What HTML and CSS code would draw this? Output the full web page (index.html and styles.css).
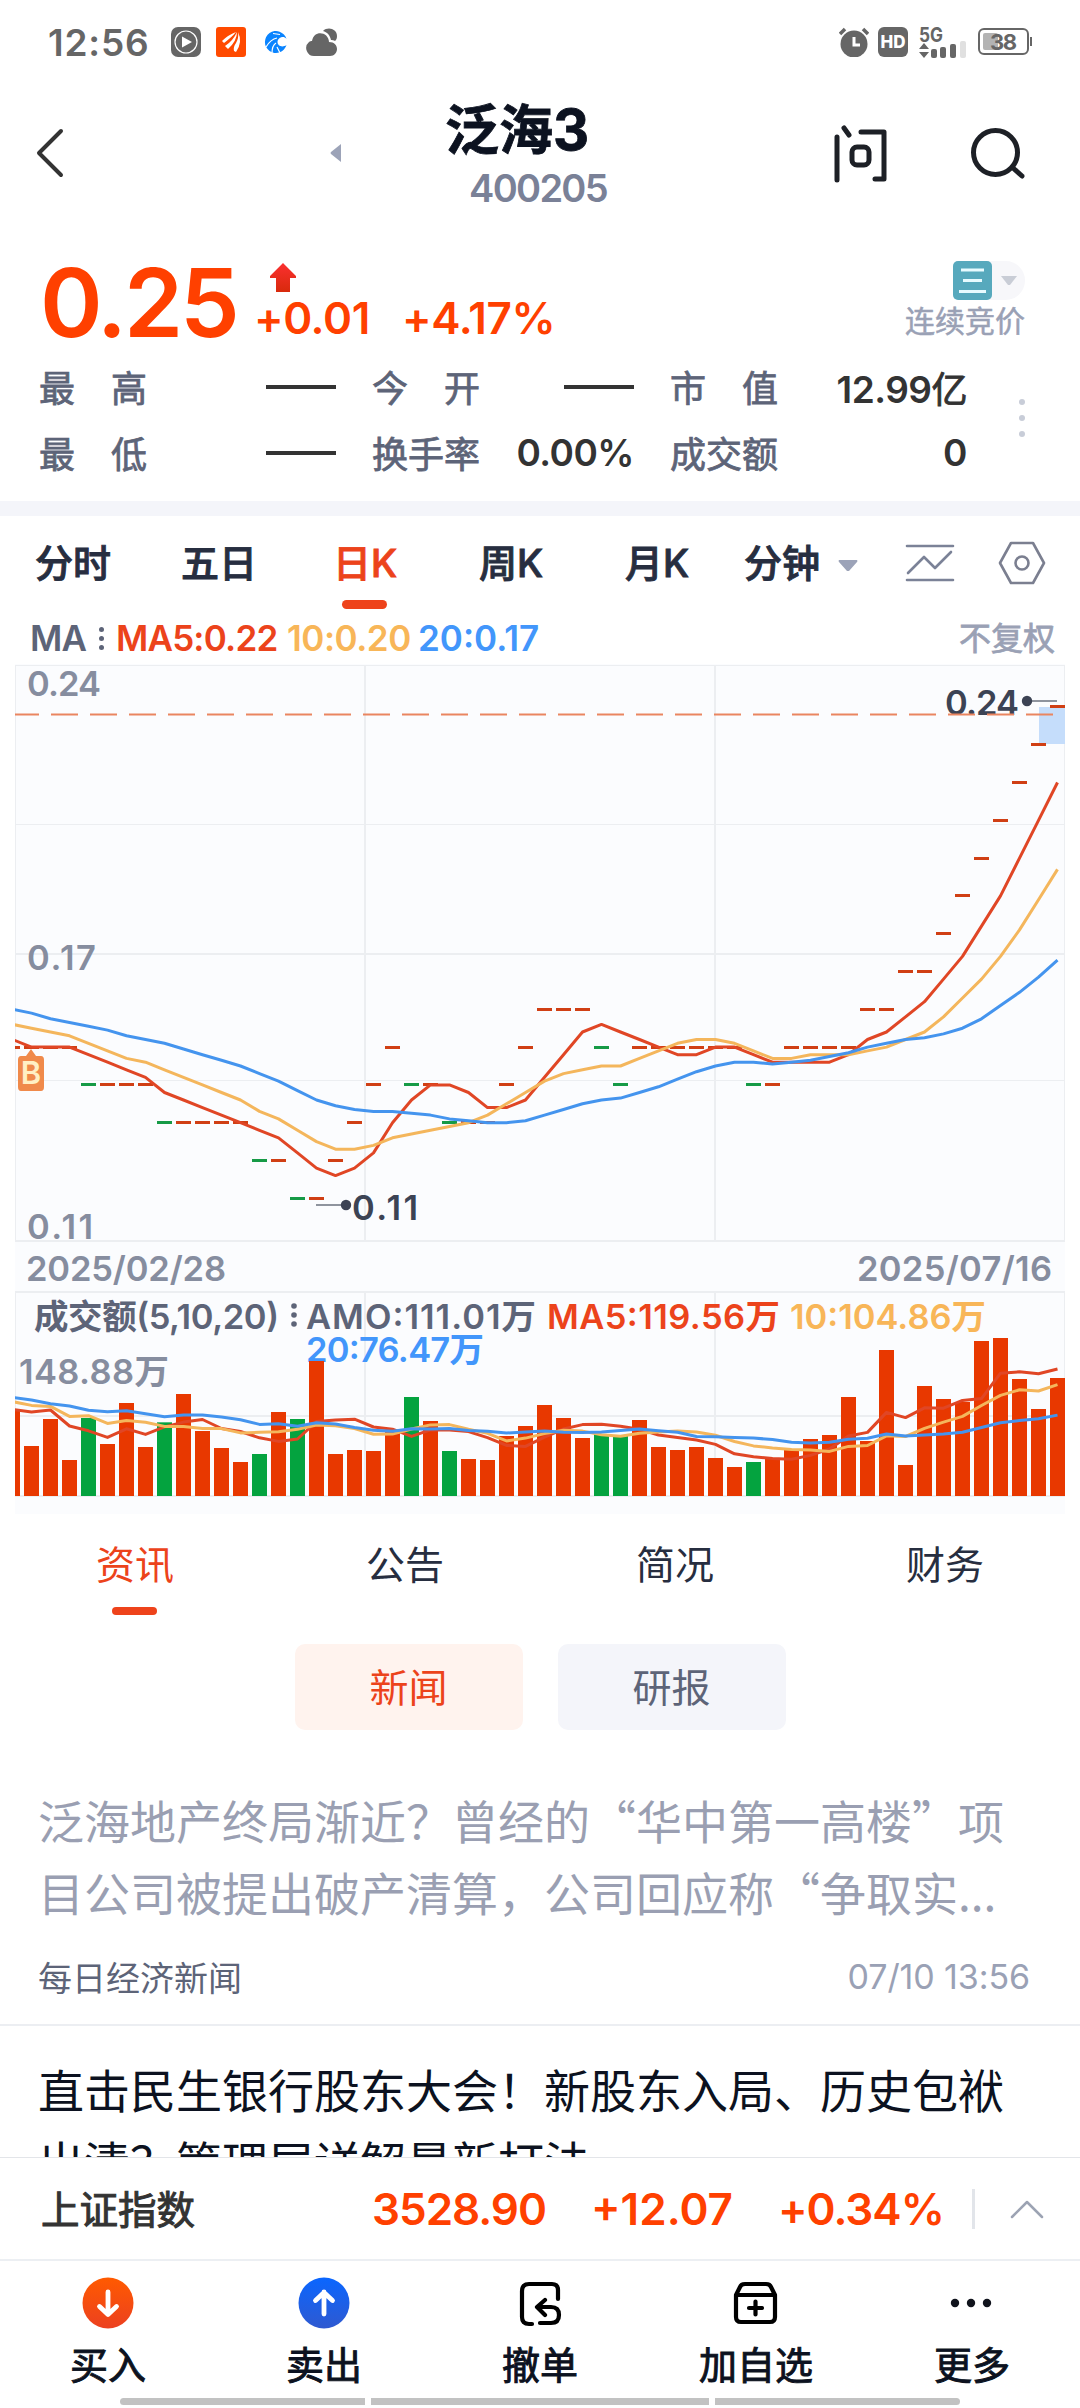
FILE: index.html
```
<!DOCTYPE html>
<html lang="zh-CN">
<head>
    <meta charset="UTF-8">
    <title>泛海3 400205</title>
    <link rel="stylesheet" href="styles.css">
</head>
<body>
    <div class="screen">
        <!-- Status bar -->
        <div class="status-bar">
            <span class="clock">12:56</span>
            <div class="status-left">
                <svg width="30" height="30" viewBox="0 0 30 30"><rect width="30" height="30" rx="7" fill="#666"/><circle cx="15" cy="15" r="11" fill="none" stroke="#fff" stroke-width="1.2"/><path d="M11 9.5v11l10-5.5z" fill="#fff"/></svg>
                <svg width="30" height="30" viewBox="0 0 30 30"><rect width="30" height="30" rx="3" fill="#ff4a00"/><path d="M6 14q6-6 14-9-4 5-12 11zM9 19q8-5 12-14 0 9-9 17zM18 24q-1-4 2-8 3-5 2-11 5 10-2 20z" fill="#fff"/></svg>
                <svg width="30" height="30" viewBox="0 0 30 30"><path d="M25.500 12A11 11 0 1 0 25.500 18c-4 3-9 1-9-3s6-7 9-3z" fill="#0a84ff"/><path d="M5 20c3-5 6-8 11-9M11 26c0-5 1-8 4-10M19 26l-3-6M12 6.500l7 1" fill="none" stroke="#fff" stroke-width="1.2"/></svg>
                <svg width="32" height="30" viewBox="0 0 32 30"><path d="M17 4c5-5 14-2 14 5 0 3-1 4-2 5-1-1-3-1-4-1-1-5-4-8-8-9z" fill="#666"/><path d="M9 29a8 8 0 0 1-6-14c1-1 2-1 3-1 2-12 17-9 17 1 11 0 10 14 1 14z" fill="#666"/></svg>
            </div>
            <div class="status-right">
                <svg width="30" height="30" viewBox="0 0 30 30"><circle cx="15" cy="17" r="13.500" fill="#666"/><path d="M1 7l5-5M29 7l-5-5" stroke="#666" stroke-width="3.500"/><path d="M15 10v8h6" fill="none" stroke="#fff" stroke-width="3"/></svg>
                <span class="hd">HD</span>
                <svg class="signal" width="50" height="31" viewBox="0 0 50 31">
                    <text x="0" y="15" font-size="20" font-weight="700" fill="#666" textLength="24" lengthAdjust="spacingAndGlyphs">5G</text>
                    <path d="M0 22l5-6 5 6zM0 25h10l-5 6z" fill="#666"/>
                    <rect x="12" y="22" width="6" height="9" rx="2" fill="#666"/><rect x="21" y="20" width="6" height="11" rx="2" fill="#666"/><rect x="31" y="17" width="6" height="14" rx="2" fill="#666"/><rect x="41" y="14" width="6" height="17" rx="2" fill="#e0e0e0"/>
                </svg>
                <svg width="55" height="28" viewBox="0 0 55 28">
                    <rect x="1" y="1" width="49" height="25" rx="5" fill="none" stroke="#666" stroke-width="2"/>
                    <rect x="5" y="5" width="15" height="17" rx="2" fill="#b3b3b3"/><rect x="52" y="9" width="2" height="9" fill="#666"/>
                    <text x="12" y="22" font-size="22" font-weight="700" fill="#666" textLength="27">38</text>
                </svg>
            </div>
        </div>

        <!-- Header -->
        <div class="header">
            <svg class="back" width="30" height="50" viewBox="0 0 30 50"><path d="M26 3L4 25l22 22" fill="none" stroke="#333" stroke-width="4" stroke-linecap="round" stroke-linejoin="round"/></svg>
            <svg class="prev" width="12" height="20" viewBox="0 0 12 20"><path d="M11 1v18L1 11q-1-1 0-2z" fill="#9ca3b8"/></svg>
            <div class="stock">
                <h1>泛海<span>3</span></h1>
                <p>400205</p>
            </div>
            <svg class="ask" width="56" height="60" viewBox="0 0 56 60"><g fill="none" stroke="#1d2026" stroke-width="5" stroke-linecap="round" stroke-linejoin="round"><path d="M5 14v43M12 5l5 7M29 9h23v47h-9"/><rect x="20" y="24" width="17" height="18" rx="5"/></g></svg>
            <svg class="search" width="56" height="52" viewBox="0 0 56 52"><g fill="none" stroke="#1d2026" stroke-width="5" stroke-linecap="round"><circle cx="25.500" cy="25.500" r="22"/><path d="M43 41l9 8"/></g></svg>
        </div>

        <!-- Quote -->
        <div class="quote">
            <div class="quote-top">
                <span class="price">0.25</span>
                <div class="change">
                    <svg width="26" height="30" viewBox="0 0 26 30"><defs><linearGradient id="up" x1="0" y1="0" x2="0" y2="1"><stop offset="0" stop-color="#fb3030"/><stop offset="1" stop-color="#d82a0c"/></linearGradient></defs><path d="M13 0l13 13v2h-6v14H6V15H0v-2z" fill="url(#up)"/></svg>
                    <div class="change-nums"><span class="diff">+0.01</span><span class="pct">+4.17%</span></div>
                </div>
                <div class="phase">
                    <div class="phase-badge">
                        <svg width="39" height="39" viewBox="0 0 39 39"><rect width="39" height="39" rx="5" fill="#57a9bd"/><path d="M8 9h23M10 19.500h19M6 30.500h27" stroke="#e8fbff" stroke-width="3"/></svg>
                        <svg width="16" height="10" viewBox="0 0 16 10"><path d="M0 0h16L9 9H7z" fill="#c9cdd6"/></svg>
                    </div>
                    <span>连续竞价</span>
                </div>
            </div>
            <div class="stats">
                <div class="stat"><label>最<i></i>高</label><b class="none"></b></div>
                <div class="stat"><label>今<i></i>开</label><b class="none"></b></div>
                <div class="stat"><label>市<i></i>值</label><b>12.99<em>亿</em></b></div>
                <div class="stat"><label>最<i></i>低</label><b class="none"></b></div>
                <div class="stat"><label>换手率</label><b>0.00%</b></div>
                <div class="stat"><label>成交额</label><b>0</b></div>
                <div class="stats-more"><i></i><i></i><i></i></div>
            </div>
        </div>

        <!-- Period tabs -->
        <div class="periods">
            <span>分时</span>
            <span>五日</span>
            <span class="active">日K</span>
            <span>周K</span>
            <span>月K</span>
            <span class="minutes">分钟<svg width="20" height="12" viewBox="0 0 20 12"><path d="M1 0h18q1 1 0 2l-8 9h-2L1 2q-1-1 0-2z" fill="#9ca3b8"/></svg></span>
            <svg class="tool-line" width="50" height="40" viewBox="0 0 50 40"><g fill="none" stroke="#7b8297" stroke-width="2.600" stroke-linecap="round" stroke-linejoin="round"><path d="M2 3h46M2 37h46M3 30l16-16 11 11L46 9"/></g></svg>
            <svg class="tool-set" width="48" height="44" viewBox="0 0 48 44"><g fill="none" stroke="#7b7f90" stroke-width="2.600"><path d="M13 2h22l11 20-11 20H13L2 22z" stroke-linejoin="round"/><circle cx="24" cy="22" r="6.500"/></g></svg>
        </div>

        <div class="ma-legend">
            <span class="ma-name">MA</span>
            <span class="dots"><i></i><i></i><i></i></span>
            <span class="ma5">MA5:0.22</span>
            <span class="ma10">10:0.20</span>
            <span class="ma20">20:0.17</span>
            <span class="adjust">不复权</span>
        </div>

        <!-- K line + turnover -->
        <svg class="chart" width="1050" height="850" viewBox="15 664 1050 850">
            <rect x="15" y="664" width="1050" height="850" fill="#fbfcfe"/>
            <g class="grid">
                <path d="M15 665.500h1050M15 824.500h1050M15 1080.500h1050M15.500 665v576M1064.500 665v576M15.500 1292v204M1064.500 1292v204" stroke-width="1"/>
                <path d="M15 954h1050M15 1241h1050M15 1292h1050M15 1416h1050M15 1496h1050M365 665v576M715 665v576M365 1292v204M715 1292v204" stroke-width="2"/>
            </g>
            <g class="axis">
                <text x="27" y="696" textLength="74">0.24</text>
                <text x="27" y="970" textLength="69">0.17</text>
                <text x="27" y="1239" textLength="66">0.11</text>
                <text x="26" y="1281" textLength="200">2025/02/28</text>
                <text x="857" y="1281" textLength="195">2025/07/16</text>
                <text x="19" y="1384" textLength="150">148.88万</text>
            </g>
            <rect x="1039" y="707" width="26" height="37" fill="#c5ddfb"/>
            <g class="mark">
                <text x="945" y="715" textLength="74">0.24</text>
                <path d="M1027 701h30M316 1205h30"/>
                <circle cx="1027" cy="701" r="5.200"/>
                <circle cx="346" cy="1205" r="5.200"/>
                <text x="352" y="1220" textLength="66">0.11</text>
            </g>
            <path class="last-price" d="M12 714.500H1053"/>
            <g class="legend">
                <text x="34" y="1329" textLength="245" fill="#5d6478">成交额(5,10,20)</text>
                <g fill="#5d6478"><circle cx="294" cy="1306" r="2.800"/><circle cx="294" cy="1315" r="2.800"/><circle cx="294" cy="1324" r="2.800"/></g>
                <text x="306" y="1329" textLength="230" fill="#5d6478">AMO:111.01万</text>
                <text x="547" y="1329" textLength="233" fill="#ec431b">MA5:119.56万</text>
                <text x="790" y="1329" textLength="196" fill="#f8b658">10:104.86万</text>
                <text x="306" y="1362" textLength="178" fill="#4296fb">20:76.47万</text>
            </g>
            <g id="candles"></g>
            <g id="bars"></g>
            <g id="lines" class="lines"></g>
            <g class="buy-mark">
                <path d="M31 1049l5 7h5q3 0 3 4v27q0 4-3 4H21q-3 0-3-4v-27q0-4 3-4h5z" fill="#f08a4b"/>
                <text x="31" y="1084" text-anchor="middle">B</text>
            </g>
        </svg>

        <!-- Info tabs -->
        <div class="info-tabs">
            <span class="active">资讯</span>
            <span>公告</span>
            <span>简况</span>
            <span>财务</span>
        </div>
        <div class="chips">
            <span class="chip active">新闻</span>
            <span class="chip">研报</span>
        </div>

        <div class="news">
            <div class="news-item read">
                <h3>泛海地产终局渐近？曾经的“华中第一高楼”项<br>目公司被提出破产清算，公司回应称“争取实...</h3>
                <div class="meta"><span>每日经济新闻</span><time>07/10 13:56</time></div>
            </div>
            <div class="news-item">
                <h3>直击民生银行股东大会！新股东入局、历史包袱<br>出清？管理层详解最新打法</h3>
            </div>
        </div>

        <!-- Index ticker -->
        <div class="ticker">
            <span class="index-name">上证指数</span>
            <span class="index-val">3528.90</span>
            <span class="index-diff">+12.07</span>
            <span class="index-pct">+0.34%</span>
            <i class="sep"></i>
            <svg width="34" height="20" viewBox="0 0 34 20"><path d="M2 18L17 3l15 15" fill="none" stroke="#9ca3b3" stroke-width="2.500" stroke-linecap="round" stroke-linejoin="round"/></svg>
        </div>

        <!-- Bottom actions -->
        <div class="actions">
            <div class="action">
                <svg width="52" height="54" viewBox="0 0 52 54"><defs><linearGradient id="buy" x1="0" y1="0" x2="0" y2="1"><stop offset="0" stop-color="#ff5a00"/><stop offset="1" stop-color="#ec4020"/></linearGradient></defs><ellipse cx="26" cy="27" rx="25.500" ry="25.500" fill="url(#buy)"/><path d="M26 16v22M17.500 30.500l8.500 8 8.500-8" fill="none" stroke="#fff" stroke-width="4.800" stroke-linecap="round" stroke-linejoin="round"/></svg>
                <span>买入</span>
            </div>
            <div class="action">
                <svg width="52" height="54" viewBox="0 0 52 54"><defs><linearGradient id="sell" x1="0" y1="0" x2="0" y2="1"><stop offset="0" stop-color="#0a66ff"/><stop offset="1" stop-color="#2f59d0"/></linearGradient></defs><ellipse cx="26" cy="27" rx="25.500" ry="25.500" fill="url(#sell)"/><path d="M26 38V16M17.500 24.500l8.500-8 8.500 8" fill="none" stroke="#fff" stroke-width="4.800" stroke-linecap="round" stroke-linejoin="round"/></svg>
                <span>卖出</span>
            </div>
            <div class="action">
                <svg width="52" height="54" viewBox="0 0 52 54"><g fill="none" stroke="#000" stroke-width="4.200" stroke-linecap="round" stroke-linejoin="round"><path d="M18 48h-3q-7 0-7-7V15q0-7 7-7h23q6 0 6 6v9M26 47h11q8 0 8-8t-8-8H24M31 24l-8 7 8 8"/></g></svg>
                <span>撤单</span>
            </div>
            <div class="action">
                <svg width="52" height="54" viewBox="0 0 52 54"><g fill="none" stroke="#000" stroke-width="4.200" stroke-linecap="round" stroke-linejoin="round"><path d="M6 19l4-8q1-3 5-3h21q4 0 5 3l4 8v22q0 5-5 5H11q-5 0-5-5zM6 19h39M19 32h13M25.500 25.500v13"/></g></svg>
                <span>加自选</span>
            </div>
            <div class="action">
                <svg width="52" height="54" viewBox="0 0 52 54"><g fill="#10131c"><circle cx="9" cy="27" r="4.200"/><circle cx="25" cy="27" r="4.200"/><circle cx="41" cy="27" r="4.200"/></g></svg>
                <span>更多</span>
            </div>
        </div>
        <div class="home-bar"><i></i><i class="mid"></i><i></i></div>
    </div>

    <script src="script.js"></script>
</body>
</html>
```
FILE: styles.css
```
* {
    margin: 0;
    padding: 0;
    box-sizing: border-box;
}

body {
    font-family: "Inter", "Noto Sans CJK SC", sans-serif;
    background: #fff;
    color: #0c1220;
}

i, em {
    font-style: normal;
}

svg {
    display: block;
    flex-shrink: 0;
}

.screen {
    width: 1080px;
    height: 2408px;
    overflow: hidden;
    display: flex;
    flex-direction: column;
}

.screen > * {
    flex-shrink: 0;
}

/* status bar */
.status-bar {
    height: 84px;
    padding: 0 47px 0 48px;
    display: flex;
    align-items: center;
}

.clock {
    width: 123px;
    font-size: 37px;
    font-weight: 600;
    letter-spacing: 0.8px;
    color: #666;
}

.status-left {
    display: flex;
    gap: 15px;
}

.status-right {
    display: flex;
    align-items: center;
    gap: 9px;
    margin-left: auto;
}

.signal {
    overflow: visible;
}

.hd {
    width: 30px;
    height: 30px;
    border-radius: 6px;
    background: #666;
    color: #fff;
    font-size: 17px;
    font-weight: 800;
    line-height: 30px;
    text-align: center;
    margin-right: 2px;
}

/* header */
.header {
    height: 138px;
    display: flex;
    align-items: center;
    padding-left: 35px;
}

.prev {
    margin-left: 265px;
}

.stock {
    width: 290px;
    margin: 14px 0 0 30px;
    text-align: center;
}

.stock h1 {
    font-size: 54px;
    font-weight: 700;
    line-height: 56px;
    color: #0c1220;
    padding-right: 4px;
    -webkit-text-stroke: 0.8px #0c1220;
}

.stock h1 span {
    font-size: 56px;
    line-height: 50px;
    letter-spacing: -4px;
}

.stock p {
    font-size: 38px;
    font-weight: 600;
    line-height: 58px;
    letter-spacing: -1.7px;
    color: #7a8197;
    padding-left: 42px;
}

.ask {
    margin-left: 170px;
}

.search {
    margin-left: 82px;
}

/* quote */
.quote {
    height: 279px;
    padding: 28px 40px 0;
}

.quote-top {
    display: flex;
    height: 104px;
    color: #ff4000;
}

.price {
    width: 214px;
    font-size: 95px;
    font-weight: 600;
    line-height: 106px;
    letter-spacing: -3.2px;
}

.change {
    padding-top: 13px;
}

.change svg {
    margin-left: 16px;
}

.change-nums {
    display: flex;
    font-size: 44px;
    font-weight: 600;
    line-height: 51px;
    letter-spacing: -0.4px;
}

.diff {
    width: 148px;
}

.phase {
    margin: 11px 15px 0 auto;
    color: #9aa1b5;
    font-size: 30px;
    line-height: 43px;
    -webkit-text-stroke: 0.5px #9aa1b5;
}

.phase-badge {
    width: 72px;
    height: 39px;
    margin-left: auto;
    display: flex;
    align-items: center;
    gap: 9px;
    background: #f7f7fa;
    border-radius: 6px 20px 20px 6px;
}

.stats {
    position: relative;
    display: grid;
    grid-template-columns: 297px 298px 295px;
    column-gap: 0;
    justify-content: start;
    margin-left: -1px;
}

.stat {
    display: flex;
    align-items: center;
    justify-content: space-between;
    height: 66px;
    font-size: 36px;
}

.stat:nth-child(3n+2) {
    padding-left: 36px;
}

.stat:nth-child(3n) {
    padding-left: 36px;
    margin-right: -38px;
}

.stat label {
    display: flex;
    margin-top: -3px;
    color: #5d6478;
    -webkit-text-stroke: 0.8px #5d6478;
}

.stat label i {
    width: 36px;
}

.stat b {
    margin-top: -1px;
    color: #333;
    font-size: 37px;
    font-weight: 600;
    letter-spacing: -0.5px;
}

.stat em {
    font-size: 36px;
    font-weight: 400;
    -webkit-text-stroke: 0.9px #333;
}

.stat .none {
    margin-top: 0;
    width: 70px;
    height: 4px;
    background: #333;
}

.stats-more {
    position: absolute;
    left: 980px;
    top: 45px;
    display: flex;
    flex-direction: column;
    gap: 10px;
}

.stats-more i {
    width: 6px;
    height: 6px;
    border-radius: 50%;
    background: #c8cdd8;
}

/* period tabs */
.periods {
    height: 109px;
    border-top: 15px solid #f4f5fa;
    display: flex;
    align-items: center;
    font-size: 38px;
    font-weight: 500;
    color: #272e40;
    -webkit-text-stroke: 0.9px currentColor;
}

.periods span {
    position: relative;
    width: 146px;
    text-align: center;
    line-height: 94px;
}

.periods .active {
    color: #ec431b;
}

.periods .active::after,
.info-tabs .active::after {
    content: "";
    position: absolute;
    left: 50%;
    bottom: 1px;
    width: 45px;
    height: 9px;
    margin-left: -23px;
    border-radius: 5px;
    background: #ee431b;
}

.periods .minutes {
    width: 128px;
    margin-left: 14px;
    display: flex;
    align-items: center;
    gap: 18px;
}

.minutes svg {
    margin-top: 6px;
}

.tool-line {
    margin-left: 33px;
}

.tool-set {
    margin-left: 43px;
}

/* moving average legend */
.ma-legend {
    height: 54px;
    padding: 3px 25px 0 30px;
    display: flex;
    align-items: center;
    font-size: 35px;
    font-weight: 600;
    line-height: 51px;
    letter-spacing: -0.8px;
}

.ma-name {
    width: 69px;
    color: #5d6478;
}

.dots {
    width: 17px;
    display: flex;
    flex-direction: column;
    gap: 4px;
}

.dots i {
    width: 5px;
    height: 5px;
    border-radius: 50%;
    background: #5d6478;
}

.ma5 {
    width: 171px;
    color: #ec431b;
}

.ma10 {
    width: 131px;
    color: #f8b658;
    letter-spacing: -0.5px;
}

.ma20 {
    color: #4296fb;
    letter-spacing: 0;
}

.adjust {
    margin-left: auto;
    font-size: 32px;
    font-weight: 400;
    letter-spacing: 0;
    color: #9aa1b5;
    -webkit-text-stroke: 0.8px #9aa1b5;
}

/* chart */
.chart {
    margin-left: 15px;
}

.chart text {
    font-size: 34.500px;
    font-weight: 600;
}

.grid path {
    fill: none;
    stroke: #eceef1;
}

.axis {
    fill: #868d9f;
}

.mark {
    fill: #3c4354;
}

.mark path {
    stroke: #8f949e;
    stroke-width: 2;
}

.last-price {
    fill: none;
    stroke: #ea8560;
    stroke-width: 2;
    stroke-dasharray: 27 12;
}

.rise {
    fill: #e83800;
}

.fall {
    fill: #04a33f;
}

#candles .rise {
    fill: #d03f14;
}

#candles .fall {
    fill: #169a46;
}

.lines polyline {
    fill: none;
    stroke-width: 3;
    stroke-linejoin: round;
}

.line-5 {
    stroke: #e04625;
}

.line-10 {
    stroke: #f4b65c;
}

.line-20 {
    stroke: #4494ee;
}

.chart .buy-mark text {
    font-size: 31px;
    fill: #fff0c4;
}

/* info tabs */
.info-tabs {
    display: flex;
    height: 104px;
    font-size: 39px;
    line-height: 102px;
    color: #272e40;
}

.info-tabs span {
    position: relative;
    flex: 1;
    text-align: center;
}

.info-tabs .active {
    color: #ec431b;
}

.info-tabs .active::after {
    bottom: 3px;
    height: 8px;
}

.chips {
    display: flex;
    justify-content: center;
    gap: 35px;
    padding-top: 26px;
    height: 139px;
}

.chip {
    width: 228px;
    height: 86px;
    border-radius: 10px;
    background: #f4f5fa;
    color: #5d6478;
    font-size: 39px;
    line-height: 88px;
    text-align: center;
}

.chip.active {
    background: #fff3ee;
    color: #ec431b;
}

/* news */
.news {
    height: 400px;
    overflow: hidden;
    font-family: "Noto Sans CJK SC", sans-serif;
}

.news-item {
    padding: 26px 38px 0;
    border-bottom: 2px solid #eceef2;
}

.news-item h3 {
    font-size: 46px;
    font-weight: 400;
    line-height: 72px;
    white-space: nowrap;
}

.news-item.read {
    height: 269px;
}

.read h3 {
    color: #9a9fb2;
}

.meta {
    display: flex;
    justify-content: space-between;
    align-items: center;
    margin-top: 25px;
    padding-right: 12px;
    font-size: 34px;
    line-height: 50px;
    color: #5d6478;
}

.meta time {
    color: #9aa1b5;
    font-family: "Inter", sans-serif;
    font-size: 34px;
    letter-spacing: -0.1px;
}

/* index ticker */
.ticker {
    height: 104px;
    padding-left: 41px;
    border-top: 1px solid #e3e5e9;
    border-bottom: 2px solid #eceff3;
    display: flex;
    align-items: center;
    font-size: 44px;
    font-weight: 600;
    letter-spacing: -1px;
    color: #ff4000;
    background: #fff;
}

.index-name {
    width: 331px;
    margin-top: -3px;
    font-size: 38.500px;
    letter-spacing: 0;
    font-weight: 400;
    color: #333;
    -webkit-text-stroke: 1px #333;
}

.index-val {
    width: 219px;
}

.index-diff {
    width: 187px;
    letter-spacing: 0;
}

.index-pct {
    width: 194px;
}

.sep {
    width: 3px;
    height: 40px;
    background: #e2e5ea;
    margin-right: 35px;
}

/* bottom actions */
.actions {
    height: 137px;
    padding-top: 15px;
    display: flex;
    background: #fff;
}

.action {
    flex: 1;
    display: flex;
    flex-direction: column;
    align-items: center;
    font-size: 38px;
    line-height: 70px;
    -webkit-text-stroke: 0.9px #0c1220;
}

.home-bar {
    display: flex;
    justify-content: center;
    gap: 6px;
}

.home-bar i {
    width: 245px;
    height: 7px;
    background: #c2c2c2;
    border-radius: 4px 0 0 4px;
}

.home-bar i:last-child {
    border-radius: 0 4px 4px 0;
}

.home-bar .mid {
    width: 338px;
    border-radius: 0;
}
```
FILE: script.js
```
const NS = 'http://www.w3.org/2000/svg';
const HISTORY = 21; // days loaded before the first visible one, needed by the averages
const STEP = 19;

// closing price, in cents
const close = [
    17, 18, 17, 16, 16, 17, 16, 15, 16, 16, 16, 16, 16, 16, 16, 16, 15, 15, 15, 15,
    15, 15, 15, 14, 14, 14, 14, 13, 13, 13, 13, 13, 12, 12, 11, 11, 12, 13, 14, 15,
    14, 14, 13, 13, 13, 14, 15, 16, 16, 16, 15, 14, 15, 15, 15, 15, 15, 15, 14, 14,
    15, 15, 15, 15, 16, 16, 17, 17, 18, 19, 20, 21, 22, 23, 24
];

// turnover, 354 = 111.01万
const amount = [
    300, 451, 248, 494, 236, 219, 327, 401, 206, 195, 264, 261, 408, 214, 386, 189, 201, 348, 306, 255,
    150, 231, 108, 234, 156, 279, 147, 221, 306, 195, 144, 102, 126, 252, 231, 405, 126, 138, 135, 198,
    297, 225, 135, 111, 108, 180, 210, 273, 234, 174, 186, 180, 228, 147, 138, 147, 114, 87, 102, 111,
    138, 171, 183, 297, 165, 438, 93, 330, 291, 282, 465, 474, 351, 261, 354
];

const centerX = i => 31.5 + STEP * (i - HISTORY + 1);
const priceY = p => 1198.3 - 37.8 * (p - 11);
const amountY = a => 1496 - a / 3;

function addRect(parent, x, y, w, h, cls) {
    const r = document.createElementNS(NS, 'rect');
    r.setAttribute('x', x);
    r.setAttribute('y', y);
    r.setAttribute('width', w);
    r.setAttribute('height', h);
    r.setAttribute('class', cls);
    document.getElementById(parent).appendChild(r);
}

function addAverage(data, n, toY) {
    const points = [];
    for (let i = HISTORY - 2; i < data.length; i++) {
        let sum = 0;
        let count = 0;
        for (let k = Math.max(0, i - n + 1); k <= i; k++) {
            sum += data[k];
            count++;
        }
        points.push(centerX(i) + ',' + toY(sum / count).toFixed(1));
    }
    const line = document.createElementNS(NS, 'polyline');
    line.setAttribute('points', points.join(' '));
    line.setAttribute('class', 'line-' + n);
    document.getElementById('lines').appendChild(line);
}

for (let i = HISTORY - 2; i < close.length; i++) {
    const cls = close[i] < close[i - 1] ? 'fall' : 'rise';
    const x = centerX(i) - 7.5;
    addRect('candles', x, Math.round(priceY(close[i]) - 1.5), 15, 3, cls);
    addRect('bars', x, amountY(amount[i]), 15, amount[i] / 3, cls);
}

[5, 10, 20].forEach(n => {
    addAverage(close, n, priceY);
    addAverage(amount, n, amountY);
});
```
